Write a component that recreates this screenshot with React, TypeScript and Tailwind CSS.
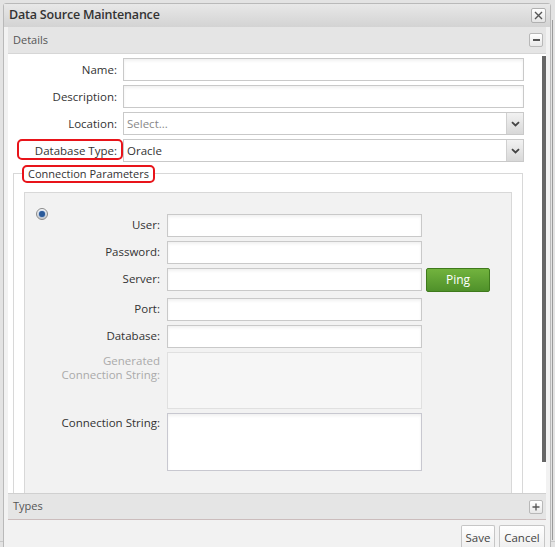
import type { ReactNode } from "react";

const font = { fontFamily: '"Open Sans", "DejaVu Sans", sans-serif' };

function TextBox({ className = "" }: { className?: string }) {
  return (
    <div
      className={`h-[23px] border border-[#c9c9c9] bg-white shadow-[inset_0_2px_3px_rgba(0,0,0,0.06)] ${className}`}
    />
  );
}

function SelectBox({ value, muted }: { value: string; muted?: boolean }) {
  return (
    <div className="flex h-[23px] w-[401px] items-center border border-[#c9c9c9] bg-white">
      <span className={`flex-1 pl-[3px] text-[11.5px] ${muted ? "text-[#888]" : "text-[#333]"}`}>
        {value}
      </span>
      <div className="flex h-full w-[17px] items-center justify-center border-l border-[#d0d0d0] bg-gradient-to-b from-[#f2f2f2] to-[#d8d8d8]">
        <svg width="9" height="6" viewBox="0 0 9 6">
          <path d="M1 1.2 L4.5 4.5 L8 1.2" stroke="#444" strokeWidth="1.8" fill="none" />
        </svg>
      </div>
    </div>
  );
}

function Row({ label, children, red }: { label: string; children: ReactNode; red?: boolean }) {
  return (
    <div className="flex h-[23px] items-center">
      <div className="relative w-[110px] pr-[1px] text-right text-[11.5px] text-[#333]">
        {red && (
          <div className="absolute left-[9px] top-[-3px] h-[21px] w-[106px] rounded-[5px] border-2 border-[#e8141a]" />
        )}
        {label}:
      </div>
      <div className="ml-[5px]">{children}</div>
    </div>
  );
}

function ConnRow({ label, children, className = "" }: { label: string; children: ReactNode; className?: string }) {
  return (
    <div className={`flex h-[23px] items-start ${className}`}>
      <div className="w-[136px] pr-[1px] pt-[3px] text-right text-[11.5px] leading-[16px] text-[#333]">
        {label}:
      </div>
      <div className="ml-[6px] flex items-start">{children}</div>
    </div>
  );
}

function IconBtn({ children }: { children: ReactNode }) {
  return (
    <div className="flex h-[14px] w-[14px] items-center justify-center rounded-[2px] border border-[#b8b8b8] bg-gradient-to-b from-white to-[#e8e8e8] text-[#555]">
      {children}
    </div>
  );
}

export default function App() {
  return (
    <div className="relative h-[547px] w-[555px] overflow-hidden bg-[#e3e3e3] pl-[3px] pt-[3px]" style={font}>
      <div className="absolute left-0 top-[541px] h-[1px] w-full bg-[#c8c8c8]" />
      <div className="absolute right-[2px] top-[20px] h-[520px] w-[1px] bg-[#9a9a9a]" />
      <div className="relative flex w-[548px] flex-col rounded-t-[3px] border border-[#b9b9b9] bg-[#f2f2f2]">
        {/* title bar */}
        <div className="flex h-[23px] items-center justify-between bg-gradient-to-b from-[#e8e8e8] to-[#d3d3d3] pl-[5px] pr-[4px]">
          <span className="text-[12.5px] font-semibold tracking-[-0.2px] text-[#333]">Data Source Maintenance</span>
          <div className="flex h-[15px] w-[15px] items-center justify-center rounded-[2px] border border-[#b0b0b0] bg-gradient-to-b from-white to-[#e4e4e4]">
            <svg width="9" height="9" viewBox="0 0 9 9">
              <path d="M1 1 L8 8 M8 1 L1 8" stroke="#555" strokeWidth="1.4" />
            </svg>
          </div>
        </div>

        <div className="px-[4px]">
          {/* details header */}
          <div className="flex h-[27px] items-center justify-between border-b border-[#d6d6d6] bg-[#e5e5e5] pl-[5px] pr-[3px]">
            <span className="text-[11px] text-[#555]">Details</span>
            <IconBtn>
              <div className="h-[1.5px] w-[7px] bg-[#555]" />
            </IconBtn>
          </div>

          {/* content */}
          <div className="flex h-[439px] bg-white">
            <div className="flex-1 overflow-hidden">
              <div className="flex flex-col gap-[4px] pt-[4px]">
                <Row label="Name">
                  <TextBox className="w-[401px]" />
                </Row>
                <Row label="Description">
                  <TextBox className="w-[401px]" />
                </Row>
                <Row label="Location">
                  <SelectBox value="Select..." muted />
                </Row>
                <Row label="Database Type" red>
                  <SelectBox value="Oracle" />
                </Row>
              </div>

              {/* fieldset */}
              <div className="relative ml-[5px] mt-[11px] w-[510px] border-l border-r border-t border-[#d8d8d8] px-[10px] pt-[18px]">
                <div className="absolute left-[8px] top-[-9px] rounded-[5px] border-2 border-[#e8141a] bg-white px-[4px] text-[11px] leading-[14px] text-[#333]">
                  Connection Parameters
                </div>
                <div className="h-[320px] border border-[#d8d8d8] bg-[#f2f2f2] pl-[11px] pt-[14px]">
                  <div className="flex">
                    <div className="mt-[1px] flex h-[12px] w-[12px] items-center justify-center rounded-full border border-[#8a8a8a] bg-gradient-to-b from-white to-[#ccc]">
                      <div className="h-[6px] w-[6px] rounded-full bg-[#2a5a9a] shadow-[0_0_2px_#5a8ad0]" />
                    </div>
                  </div>
                  <div className="ml-[-11px] mt-[-6px] flex flex-col gap-[4px]">
                    <ConnRow label="User">
                      <TextBox className="w-[255px]" />
                    </ConnRow>
                    <ConnRow label="Password">
                      <TextBox className="w-[255px]" />
                    </ConnRow>
                    <ConnRow label="Server">
                      <TextBox className="w-[255px]" />
                      <div className="ml-[4px] flex h-[24px] w-[64px] items-center justify-center rounded-[2px] border border-[#3f7a1c] bg-gradient-to-b from-[#72b33e] to-[#4f912a] text-[12px] text-white">
                        Ping
                      </div>
                    </ConnRow>
                    <ConnRow label="Port" className="mt-[3px]">
                      <TextBox className="w-[255px]" />
                    </ConnRow>
                    <ConnRow label="Database">
                      <TextBox className="w-[255px]" />
                    </ConnRow>
                    <div className="flex h-[57px] items-start">
                      <div className="w-[136px] pr-[1px] pt-[2px] text-right text-[11.5px] leading-[14px] text-[#aaa]">
                        Generated
                        <br />
                        Connection String:
                      </div>
                      <div className="ml-[6px] h-[57px] w-[255px] border border-[#e0e0e0] bg-[#f6f6f6]" />
                    </div>
                    <div className="flex h-[58px] items-start">
                      <div className="w-[136px] pr-[1px] pt-[2px] text-right text-[11.5px] leading-[16px] text-[#333]">
                        Connection String:
                      </div>
                      <div className="ml-[6px] h-[58px] w-[255px] border border-[#c8c8d0] bg-white shadow-[inset_0_2px_3px_rgba(0,0,0,0.06)]" />
                    </div>
                  </div>
                </div>
              </div>
            </div>
            <div className="mt-[2px] h-[406px] w-[4px] bg-[#666]" />
          </div>

          {/* types header */}
          <div className="flex h-[27px] items-center justify-between border-b border-t border-b-[#cbbcbc] border-t-[#d0d0d0] bg-[#e5e5e5] pl-[5px] pr-[3px]">
            <span className="text-[11px] text-[#555]">Types</span>
            <IconBtn>
              <svg width="8" height="8" viewBox="0 0 8 8">
                <path d="M4 0.5 V7.5 M0.5 4 H7.5" stroke="#555" strokeWidth="1.3" />
              </svg>
            </IconBtn>
          </div>

          {/* footer */}
          <div className="flex h-[30px] justify-end gap-[4px] pr-[1px] pt-[5px]">
            <div className="flex h-[24px] w-[34px] items-start justify-center rounded-t-[2px] border border-b-0 border-[#c6c6c6] bg-gradient-to-b from-white to-[#eee] pt-[3px] text-[11.5px] text-[#444]">
              Save
            </div>
            <div className="flex h-[24px] w-[46px] items-start justify-center rounded-t-[2px] border border-b-0 border-[#c6c6c6] bg-gradient-to-b from-white to-[#eee] pt-[3px] text-[11.5px] text-[#444]">
              Cancel
            </div>
          </div>
        </div>
      </div>
    </div>
  );
}
